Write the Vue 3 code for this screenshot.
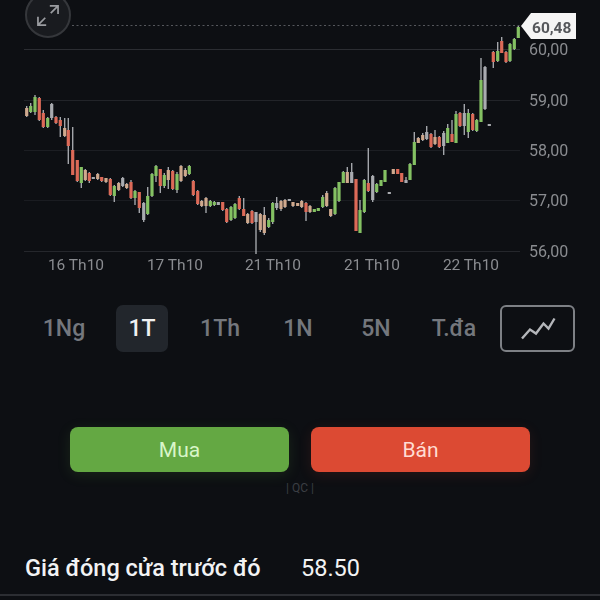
<script setup>
// x, wick top, wick bottom, body top, body bottom, kind (r red, g green, t tan, w grey)
const candles = [
  [26.7,106,117,108,116,'t'],[30.7,103,113,106,112,'g'],[35,95,115,97,112,'g'],[39.3,97,121,98,120,'r'],
  [43.3,110,128,113,127,'r'],[47.7,117,128,118,127,'g'],[51.7,103,120,104,118,'w'],[56,116,124,117,123,'r'],
  [60.3,117,137,120,126,'r'],[64.7,118,137,128,136,'t'],[68.3,118,164,130,146,'r'],[72.7,127,175,150,175,'r'],
  [77.3,160,182,160,181,'r'],[81.3,167,188,167,183,'g'],[85.3,169,181,170,180,'t'],[89.3,172,183,173,181,'r'],
  [93.3,177,179,177,179,'w'],[97.7,173,180,174,179,'t'],[101.7,177,182,177,181,'r'],[106,178,183,178,182,'t'],
  [110.3,178,196,179,195,'r'],[114.3,185,202,186,196,'g'],[118.7,182,191,183,190,'t'],[122.7,177,187,178,186,'w'],
  [126.7,183,189,184,188,'t'],[131,180,199,182,198,'r'],[135,190,205,191,198,'g'],[139.3,192,213,192,208,'r'],
  [143.7,202,222,203,220,'w'],[147.7,187,215,196,214,'g'],[152,173,197,174,196,'g'],[156,165,182,166,176,'g'],
  [160.3,169,193,169,186,'r'],[164.3,173,188,175,186,'g'],[168.3,167,189,170,180,'t'],[172.7,170,190,171,189,'r'],
  [177,172,193,174,190,'g'],[181,165,182,166,181,'t'],[185.3,168,177,170,176,'t'],[189.3,165,175,166,174,'g'],
  [193.3,180,196,181,195,'r'],[197.7,190,205,191,204,'r'],[201.7,200,207,201,206,'t'],[206,197,213,198,206,'t'],
  [210.3,200,207,201,206,'g'],[214.3,201,206,202,205,'g'],[218.3,202,205,202,205,'w'],[222.7,202,211,202,210,'r'],
  [226.7,208,223,209,222,'r'],[231,206,221,207,220,'g'],[235,203,219,204,218,'g'],[239.3,196,210,198,209,'r'],
  [243.7,198,216,209,216,'r'],[247.7,213,224,214,223,'t'],[252,210,224,211,223,'r'],[256,212,254,212,222,'w'],
  [260.3,213,232,214,230,'t'],[264.3,207,235,215,233,'t'],[268.7,218,228,220,227,'g'],[272.7,202,224,203,222,'g'],
  [276.7,197,210,203,208,'w'],[281,200,211,201,209,'t'],[285,199,208,200,207,'t'],[289.3,199,201,199,201,'w'],
  [293,202,207,202,206,'t'],[297.7,203,206,203,206,'t'],[301.7,200,208,201,207,'t'],[306,202,221,203,212,'r'],
  [310,205,213,206,212,'t'],[314.3,209,212,209,212,'g'],[318.3,208,211,208,211,'g'],[322.7,195,208,197,207,'g'],
  [326.7,191,207,193,206,'t'],[330.7,209,217,209,216,'t'],[335,187,215,188,214,'g'],[339,182,202,182,201,'g'],
  [343.3,171,183,172,183,'g'],[347.3,167,183,172,183,'t'],[351.7,163,183,172,183,'w'],[356,179,231,179,231,'r'],
  [360,200,233,210,233,'g'],[364.3,179,213,180,212,'g'],[368.3,148,192,183,191,'r'],[372.7,175,202,176,200,'w'],
  [376.7,183,193,184,192,'g'],[381,180,186,180,186,'g'],[385,170,182,170,182,'g'],[389.3,192,194,192,194,'w'],
  [393.3,169,174,169,174,'t'],[397.7,169,174,169,174,'r'],[401.7,173,182,173,182,'r'],[406,177,183,180,183,'w'],
  [410,163,180,164,180,'g'],[414.3,132,165,142,165,'g'],[418.3,137,143,138,143,'t'],[422.7,133,141,135,140,'t'],
  [426.7,126,140,132,139,'w'],[431,133,148,134,147,'r'],[435,130,145,137,144,'t'],[439.3,136,148,137,147,'r'],
  [443.7,131,155,133,146,'w'],[447.7,124,143,128,143,'g'],[452,120,142,134,142,'r'],[456,111,143,114,143,'g'],
  [460,112,127,113,126,'r'],[464.3,104,135,113,126,'w'],[468.3,109,138,113,132,'g'],[472.7,113,131,114,130,'r'],
  [476.7,119,132,120,131,'g'],[481,58,122,80,122,'g'],[485,66,110,67,109,'w'],[489.3,124,126,124,126,'w'],
  [493.3,51,68,52,62,'r'],[497.7,42,62,51,61,'g'],[501.7,37,53,41,53,'r'],[506,51,63,52,62,'r'],
  [510,43,62,44,61,'g'],[514.3,38,50,39,49,'g'],[518.3,26,38,27,38,'g']
]

const grid = [
  { y: 49.5, color: '#2b2d32' },
  { y: 100.5, color: '#222429' },
  { y: 150.5, color: '#1c1e23' },
  { y: 200.5, color: '#1a1c21' },
  { y: 251.5, color: '#25272c' }
]
const prices = [
  { y: 49, text: '60,00' },
  { y: 100, text: '59,00' },
  { y: 150, text: '58,00' },
  { y: 200, text: '57,00' },
  { y: 251, text: '56,00' }
]
const dates = [
  { x: 76, text: '16 Th10' },
  { x: 175, text: '17 Th10' },
  { x: 273, text: '21 Th10' },
  { x: 372, text: '21 Th10' },
  { x: 471, text: '22 Th10' }
]
const periods = ['1Ng', '1T', '1Th', '1N', '5N', 'T.đa']
const colors = { r: '#dc6a58', g: '#84c163', t: '#cfa98e', w: '#a9abb0' }
</script>

<template>
  <div class="page">
    <div class="chart">
      <svg class="plot" width="600" height="285" viewBox="0 0 600 285">
        <line v-for="g in grid" :key="g.y" x1="24" x2="520" :y1="g.y" :y2="g.y" :stroke="g.color" />
        <line x1="72" x2="522" y1="25.5" y2="25.5" stroke="#55575c" stroke-dasharray="2 2.5" />
        <g v-for="c in candles" :key="c[0]">
          <line :x1="c[0]" :x2="c[0]" :y1="c[1]" :y2="c[2]" stroke="#a3a5aa" stroke-width="1.4" />
          <rect :x="c[0] - 1.6" :y="c[3]" width="3.2" :height="c[4] - c[3]" :fill="colors[c[5]]" />
        </g>
        <text v-for="p in prices" :key="p.text" class="axis" x="529" :y="p.y + 6">{{ p.text }}</text>
        <text v-for="(d, i) in dates" :key="i" class="axis date" :x="d.x" y="270">{{ d.text }}</text>
        <polygon points="521,26 531,13 576,13 576,39 531,39" fill="#f5f5f5" />
        <text class="tag" x="532" y="33">60,48</text>
      </svg>
      <div class="expand">
        <svg width="46" height="46" viewBox="0 0 46 46" fill="none" stroke="#9a9ca0" stroke-width="1.9">
          <path d="M12 25v9h9M12 34l8-8M26 21l8-8M25 13h9v9" />
        </svg>
      </div>
    </div>

    <div class="periods">
      <div v-for="p in periods" :key="p" class="period">
        <span class="period-label" :class="{ active: p === '1T' }">{{ p }}</span>
      </div>
      <div class="type-btn">
        <svg width="40" height="26" viewBox="0 0 40 26" fill="none" stroke="#b4b6ba" stroke-width="2.4">
          <path d="M4 22.5l8-9 6 4 7.500-10 5 5 6-10" />
        </svg>
      </div>
    </div>

    <div class="actions">
      <button class="trade buy">Mua</button>
      <button class="trade sell">Bán</button>
    </div>
    <div class="ad">| QC |</div>

    <div class="info-row">
      <span class="info-label">Giá đóng cửa trước đó</span>
      <span class="info-value">58.50</span>
    </div>
  </div>
</template>

<style scoped>
.page {
  width: 600px;
  height: 600px;
  overflow: hidden;
  background: #0d0f13;
  font-family: Roboto, "Noto Sans", sans-serif;
}

.chart {
  position: relative;
  height: 285px;
}

.plot {
  display: block;
  filter: blur(0.5px);
}

.axis {
  font-size: 16px;
  fill: #8a8c90;
}

.date {
  font-size: 15.5px;
  text-anchor: middle;
}

.tag {
  font-size: 15.5px;
  font-weight: 700;
  fill: #55575b;
}

.expand {
  position: absolute;
  left: 25px;
  top: -8px;
  width: 46px;
  height: 46px;
  box-sizing: border-box;
  border: 2px solid #35373b;
  border-radius: 50%;
  background: #191b1f;
  display: flex;
  align-items: center;
  justify-content: center;
}

.periods {
  display: flex;
  align-items: center;
  margin-top: 20px;
  padding-left: 25px;
  height: 47px;
}

.period {
  width: 78px;
  flex: none;
  display: flex;
  justify-content: center;
}

.period-label {
  box-sizing: border-box;
  min-width: 52px;
  height: 47px;
  line-height: 47px;
  text-align: center;
  font-size: 23px;
  font-weight: 500;
  color: #74777d;
  border-radius: 7px;
}

.period-label.active {
  background: #22262c;
  color: #f0f1f2;
}

.type-btn {
  box-sizing: border-box;
  flex: none;
  width: 75px;
  height: 47px;
  margin-left: 7px;
  border: 2px solid #7d8085;
  border-radius: 6px;
  display: flex;
  align-items: center;
  justify-content: center;
}

.actions {
  display: flex;
  gap: 22px;
  margin-top: 75px;
  padding-left: 70px;
}

.trade {
  width: 219px;
  height: 45px;
  border: none;
  border-radius: 8px;
  font-family: inherit;
  font-size: 21px;
  padding: 0;
}

.buy {
  background: #64a843;
  color: #d8f5c8;
  box-shadow: 0 3px 14px rgba(100, 168, 67, 0.14);
}

.sell {
  background: #dc4a33;
  color: #ffdcd2;
  box-shadow: 0 3px 14px rgba(220, 74, 51, 0.12);
}

.ad {
  margin-top: 10px;
  text-align: center;
  font-size: 12px;
  line-height: 12px;
  color: #3b3e43;
}

.info-row {
  display: flex;
  align-items: flex-start;
  margin-top: 54px;
  padding: 6px 25px 0 25px;
  height: 40px;
  border-bottom: 2px solid #2c2e33;
  font-size: 23.5px;
  line-height: 28px;
  color: #f2f3f4;
}

.info-label {
  width: 276px;
  flex: none;
  font-weight: 500;
}
</style>
